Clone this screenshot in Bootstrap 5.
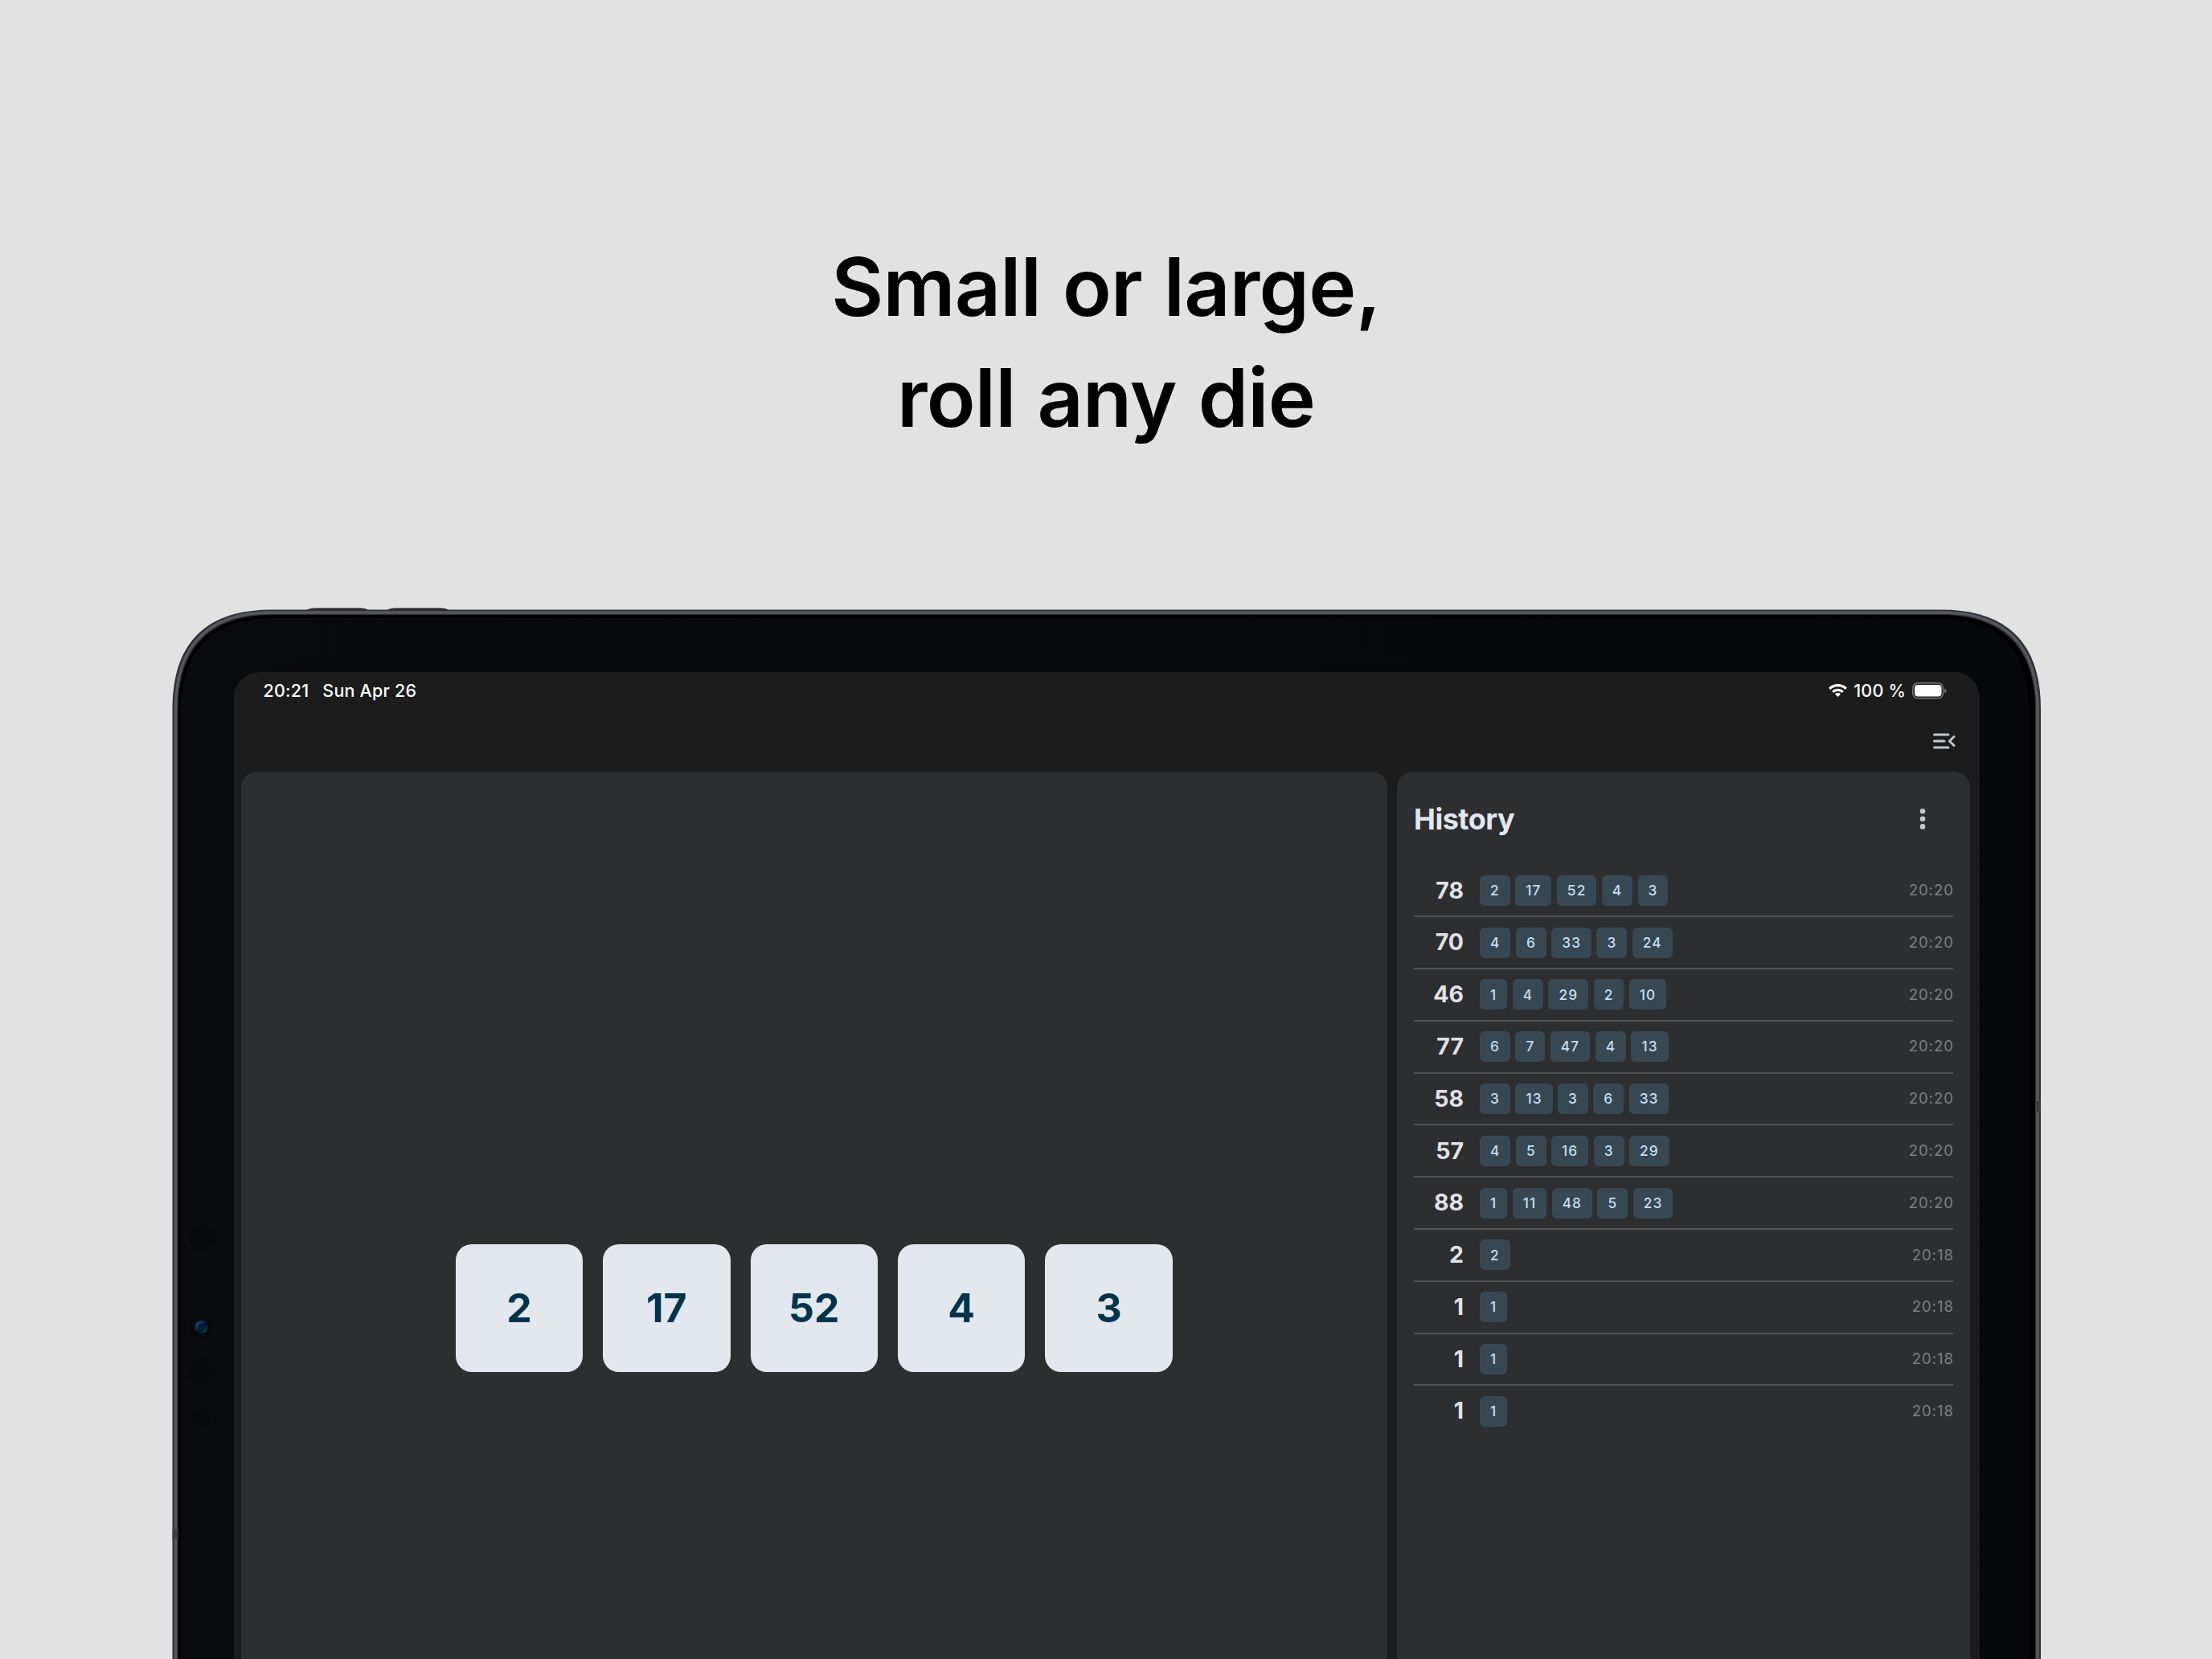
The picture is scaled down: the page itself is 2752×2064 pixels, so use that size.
<!DOCTYPE html>
<html lang="en">
<head>
<meta charset="utf-8">
<title>Dice roller</title>
<link href="https://cdn.jsdelivr.net/npm/bootstrap@5.3.0/dist/css/bootstrap.min.css" rel="stylesheet">
<style>
html,body{height:100%}
body{background:#e2e2e2;font-family:Inter,"Liberation Sans",sans-serif;width:2752px;height:2064px;overflow:hidden}
.promo{height:758px;padding-top:288px}
.headline{font-size:100px;line-height:138px;font-weight:600;color:#000;letter-spacing:-.8px;word-spacing:2.5px}
.device{width:2325px;height:1306px;margin-left:214px;padding:77.5px 76px 0 76.5px}
.shell{left:0;top:-4px;width:2325px;height:1310px}
.screen{background:#1c1c1c;border-radius:32px 32px 0 0;height:1228.5px;color:#fff}
.statusbar{height:48px;padding:0 41px 0 37px;font-size:21.5px;font-weight:500;line-height:47px;letter-spacing:.2px}
.clock{gap:17px}
.toolbar-row{height:77px;padding:0 30px 0 0}
.panes{gap:12.5px;padding:0 12px 0 9.5px;margin-top:-.5px}
.pane{background:#2d2e30;border-radius:20px;height:1335px}
.pane-hist{width:713px;padding:0 21px}
.dice{gap:25px}
.die{width:158.4px;height:158.4px;border-radius:20px;background:#e3e7ee;color:#00344d;font-size:50px;font-weight:700;padding-top:1px}
.hist-head{height:116.500px;padding-top:1px}
.hist-title{font-size:36px;font-weight:700;color:#e2e8f0;letter-spacing:-.5px;line-height:1}
.entry{height:64.8px;border-bottom:2px solid #515254}
.entry:last-child{border-bottom-color:transparent}
.total{width:62px;font-size:28.5px;font-weight:700;color:#e2e2e6;margin-right:20px}
.chips{gap:6.4px}
.chip{height:38px;border-radius:6px;background:#374853;color:#c5dff0;font-size:17.3px;font-weight:500;letter-spacing:1.1px;padding:0 12.9px 0 13.1px}
.when{font-size:18.5px;color:#7b8084;letter-spacing:1px;margin-right:-.9px}
</style>
<script src="https://cdn.jsdelivr.net/npm/bootstrap@5.3.0/dist/js/bootstrap.bundle.min.js"></script>
</head>
<body>
<header class="promo text-center">
  <h1 class="headline m-0">Small or large,<br>roll any die</h1>
</header>
<main class="device position-relative">
  <svg class="shell position-absolute" viewBox="0 -4 2325 1310" aria-hidden="true">
    <defs>
      <linearGradient id="glass" x1="0" x2="1"><stop offset="0" stop-color="#090b0f"/><stop offset=".5" stop-color="#08090d"/><stop offset="1" stop-color="#05070a"/></linearGradient>
      <linearGradient id="lens" x1="0" y1="0" x2="1" y2="1"><stop offset="0" stop-color="#3a3a5e"/><stop offset=".35" stop-color="#0a3363"/><stop offset=".55" stop-color="#04101c"/><stop offset="1" stop-color="#0b5a7c"/></linearGradient>
    </defs>
    <path d="M167 2q4-2.500 10-2.500h58q6 0 10 2.500zM267 2q4-2.500 10-2.500h58q6 0 10 2.500z" transform="translate(0 -1)" fill="#26262b"/>
    <path d="M.5 1330V124C.5 42 42 .5 124 .5H2201C2283 .5 2325 42 2325 124V1330Z" fill="#303137"/>
    <path d="M4.500 1330V124C4.500 45 45 4 124 4H2201C2280 4 2321 45 2321 124V1330" fill="none" stroke="#56585e" stroke-width="3.500"/>
    <path d="M7.500 1330V124C7.500 48 48 7 124 7H2201C2277 7 2318 48 2318 124V1330Z" fill="#000"/>
    <path d="M11 1330V126C11 51 51 11 126 11H2200C2274 11 2310 51 2310 126V1330Z" fill="url(#glass)"/>
    <circle cx="36.500" cy="782" r="16" fill="#07090d"/>
    <circle cx="36.500" cy="949" r="16" fill="#07090d"/>
    <circle cx="36.500" cy="1004.500" r="10.500" fill="#07090d"/>
    <circle cx="36.500" cy="893" r="14" fill="#07090c"/>
    <circle cx="36.500" cy="893" r="8" fill="url(#lens)"/>
    <circle cx="37" cy="893.500" r="4.500" fill="#041a30"/>
    <path d="M2318 612h7v13h-7zM.5 1144h7v13h-7z" fill="#3c3d43"/>
  </svg>
  <section class="screen position-relative overflow-hidden">
    <div class="statusbar d-flex justify-content-between align-items-start">
      <div class="clock d-flex"><span>20:21</span><span>Sun Apr 26</span></div>
      <div class="d-flex align-items-center">
        <svg width="23" height="16" viewBox="0 0 23 16" fill="none" stroke="#fff" stroke-width="3.200" aria-label="Wi-Fi"><path d="M1.200 5.800a14.800 14.800 0 0 1 20.600 0M5.200 9.900a9 9 0 0 1 12.600 0"/><path d="M11.500 16 8 12.500a5 5 0 0 1 7 0z" fill="#fff" stroke="none"/></svg>
        <span class="ms-2 me-2">100 %</span>
        <svg width="43" height="21" viewBox="0 0 43 21" aria-label="Battery"><rect x=".8" y=".8" width="37.700" height="19" rx="6" fill="none" stroke="#76777a" stroke-width="1.500"/><rect x="3" y="3" width="33.500" height="14.600" rx="4" fill="#fff"/><path d="M40.300 7.200q2.200 1 2.200 3.100t-2.200 3.100z" fill="#76777a"/></svg>
      </div>
    </div>
    <div class="toolbar-row d-flex justify-content-end align-items-center">
      <svg width="28" height="20" viewBox="0 0 28 20" fill="none" stroke="#c1c7ce" stroke-width="3" stroke-linecap="round" aria-label="Open menu"><path d="M1.500 2H19M1.500 10H14M1.500 18H19"/><path d="M26 4.500 20.500 10 26 15.500" stroke-linejoin="round"/></svg>
    </div>
    <div class="panes d-flex">
      <div class="pane flex-grow-1 d-flex justify-content-center align-items-center">
        <div class="dice d-flex">
          <div class="die d-flex justify-content-center align-items-center">2</div>
          <div class="die d-flex justify-content-center align-items-center">17</div>
          <div class="die d-flex justify-content-center align-items-center">52</div>
          <div class="die d-flex justify-content-center align-items-center">4</div>
          <div class="die d-flex justify-content-center align-items-center">3</div>
        </div>
      </div>
      <aside class="pane pane-hist flex-shrink-0">
        <div class="hist-head d-flex justify-content-between align-items-center">
          <h2 class="hist-title m-0">History</h2>
          <svg width="8" height="28" viewBox="0 0 8 28" fill="#c5c7ce" style="margin-right:34px" aria-label="More"><circle cx="4" cy="4.300" r="3.300"/><circle cx="4" cy="13.800" r="3.300"/><circle cx="4" cy="23.400" r="3.300"/></svg>
        </div>
        <div id="entries"></div>
      </aside>
    </div>
  </section>
</main>
<script>
const rolls=[[78,[2,17,52,4,3],"20:20"],[70,[4,6,33,3,24],"20:20"],[46,[1,4,29,2,10],"20:20"],[77,[6,7,47,4,13],"20:20"],[58,[3,13,3,6,33],"20:20"],[57,[4,5,16,3,29],"20:20"],[88,[1,11,48,5,23],"20:20"],[2,[2],"20:18"],[1,[1],"20:18"],[1,[1],"20:18"],[1,[1],"20:18"]];
document.getElementById("entries").innerHTML=rolls.map(([t,d,w])=>`<div class="entry d-flex align-items-center"><span class="total text-end">${t}</span><div class="chips d-flex">${d.map(n=>`<span class="chip d-flex align-items-center">${n}</span>`).join("")}</div><span class="when ms-auto">${w}</span></div>`).join("");
</script>
</body>
</html>
